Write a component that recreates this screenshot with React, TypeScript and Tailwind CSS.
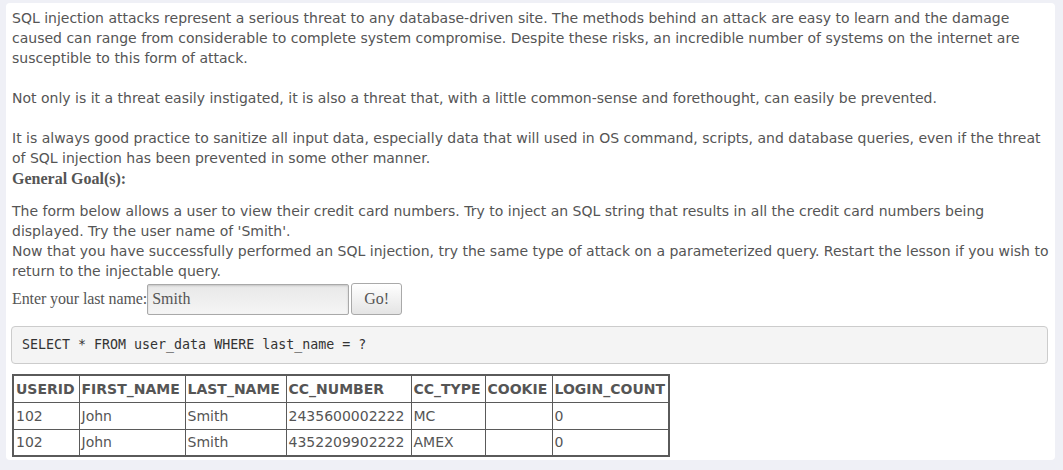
import React from "react";

const rows = [
  ["102", "John", "Smith", "2435600002222", "MC", "", "0"],
  ["102", "John", "Smith", "4352209902222", "AMEX", "", "0"],
];

const cols = ["USERID", "FIRST_NAME", "LAST_NAME", "CC_NUMBER", "CC_TYPE", "COOKIE", "LOGIN_COUNT"];
const widths = ["w-[66px]", "w-[106px]", "w-[101px]", "w-[125px]", "w-[74px]", "w-[67px]", "w-[117px]"];

const App: React.FC = () => {
  return (
    <div className="min-h-[470px] bg-[#eff0f6] pt-[3px] pl-[6px] pr-[8px] pb-[10px]">
      <div className="bg-white rounded-[4px] pl-[6px] pr-[3px] pt-[5px] pb-[3px] text-[#555] font-['DejaVu_Sans',sans-serif] text-[14px] leading-[20px]">
        {/* Lesson text */}
        <p className="pr-[3px]">
          SQL injection attacks represent a serious threat to any database-driven site. The methods behind an attack are
          easy to learn and the damage caused can range from considerable to complete system compromise. Despite these
          risks, an incredible number of systems on the internet are susceptible to this form of attack.
        </p>
        <p className="mt-[20px] pr-[3px]">
          Not only is it a threat easily instigated, it is also a threat that, with a little common-sense and
          forethought, can easily be prevented.
        </p>
        <p className="mt-[20px] pr-[3px]">
          It is always good practice to sanitize all input data, especially data that will used in OS command, scripts,
          and database queries, even if the threat of SQL injection has been prevented in some other manner.
        </p>

        <div className="mt-[2px] font-['Liberation_Serif',serif] font-bold text-[16px] leading-[18px]">
          General Goal(s):
        </div>

        <p className="mt-[13px]">
          The form below allows a user to view their credit card numbers. Try to inject an SQL string that results in
          all the credit card numbers being displayed. Try the user name of 'Smith'.
          <br />
          Now that you have successfully performed an SQL injection, try the same type of attack on a parameterized
          query. Restart the lesson if you wish to return to the injectable query.
        </p>

        {/* Form */}
        <div className="mt-[2px] flex items-center font-['Liberation_Serif',serif] text-[16px]">
          <span className="tracking-[-0.1px]">Enter your last name:</span>
          <input
            readOnly
            value="Smith"
            className="w-[202px] h-[31px] px-[4px] bg-gradient-to-b from-[#e8e8e8] to-[#f5f5f5] border border-[#a9a9a9] rounded-[2px] shadow-[inset_0_1px_2px_rgba(0,0,0,0.15)] text-[#555] font-['Liberation_Serif',serif] text-[16px] outline-none"
          />
          <button className="ml-[2px] w-[51px] h-[32px] bg-gradient-to-b from-[#ffffff] to-[#e4e4e4] border border-[#a9a9a9] rounded-[3px] text-[#555] font-['Liberation_Serif',serif] text-[16px]">
            Go!
          </button>
        </div>

        {/* Query */}
        <pre className="mt-[11px] ml-[-1px] mr-[4px] px-[10px] py-[9px] bg-[#f4f4f4] border border-[#cccccc] rounded-[4px] font-['DejaVu_Sans_Mono',monospace] text-[13.3px] leading-[18px] text-[#333]">
          SELECT * FROM user_data WHERE last_name = ?
        </pre>

        {/* Results */}
        <table className="mt-[10px] table-fixed border-collapse border-2 border-[#5a5a5a] w-[656px]">
          <thead>
            <tr>
              {cols.map((c, i) => (
                <th key={c} className={`${widths[i]} border border-[#5a5a5a] px-[2px] h-[27px] text-left font-bold`}>
                  {c}
                </th>
              ))}
            </tr>
          </thead>
          <tbody>
            {rows.map((r, i) => (
              <tr key={i}>
                {r.map((v, j) => (
                  <td key={j} className="border border-[#5a5a5a] px-[2px] h-[27px]">
                    {v}
                  </td>
                ))}
              </tr>
            ))}
          </tbody>
        </table>
      </div>
    </div>
  );
};

export default App;
